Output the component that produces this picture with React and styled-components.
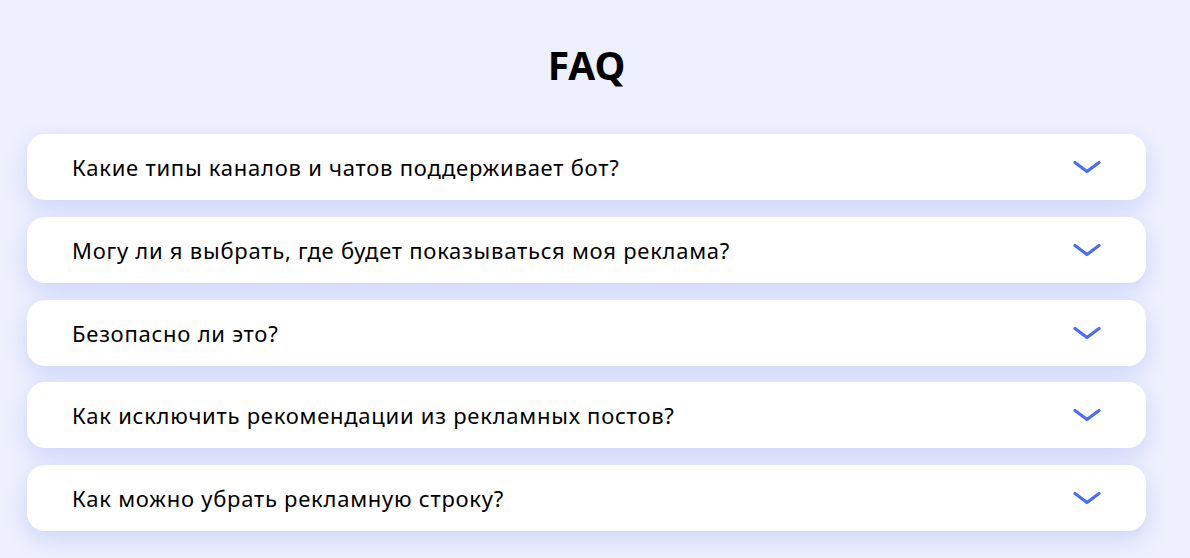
import React from "react";
import styled, { createGlobalStyle } from "styled-components";

const Global = createGlobalStyle`
  html, body { margin: 0; padding: 0; }
  body {
    background: #eef0fd;
    font-family: "Noto Sans", "Open Sans", sans-serif;
    color: #000;
  }
`;

const Section = styled.section`
  width: 1190px;
  height: 558px;
  box-sizing: border-box;
  padding: 38px 44px 0 27px;
  display: flex;
  flex-direction: column;
  align-items: stretch;
  overflow: hidden;
`;

const Title = styled.h2`
  margin: 0 0 43px;
  text-align: center;
  font-size: 39px;
  line-height: 53px;
  font-weight: 700;
`;

const List = styled.div`
  display: flex;
  flex-direction: column;
  gap: 16.75px;
`;

const Item = styled.div`
  height: 66px;
  box-sizing: border-box;
  background: #fff;
  border-radius: 18px;
  padding: 0 45px 0 45px;
  display: flex;
  align-items: center;
  justify-content: space-between;
  box-shadow: 0 8px 22px rgba(92, 120, 240, 0.22);
`;

const Question = styled.span`
  font-size: 22px;
  line-height: 30px;
  font-weight: 400;
  letter-spacing: 0.75px;
  color: #000;
`;

const Chevron = () => (
  <svg width="28" height="14" viewBox="0 0 28 14" fill="none">
    <path d="M2 2.5 L14 11.5 L26 2.5" stroke="#4a6cf7" strokeWidth="3.2" strokeLinecap="round" strokeLinejoin="round" />
  </svg>
);

const questions = [
  "Какие типы каналов и чатов поддерживает бот?",
  "Могу ли я выбрать, где будет показываться моя реклама?",
  "Безопасно ли это?",
  "Как исключить рекомендации из рекламных постов?",
  "Как можно убрать рекламную строку?",
];

export default function App() {
  return (
    <>
      <Global />
      <Section>
        <Title>FAQ</Title>
        <List>
          {questions.map((q) => (
            <Item key={q}>
              <Question>{q}</Question>
              <Chevron />
            </Item>
          ))}
        </List>
      </Section>
    </>
  );
}
